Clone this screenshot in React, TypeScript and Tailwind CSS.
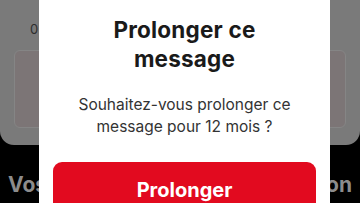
import React from 'react';

const App: React.FC = () => {
    return (
        <div
            className="relative w-[360px] h-[203px] overflow-hidden bg-black"
            style={{ fontFamily: 'Inter, "Noto Sans", sans-serif' }}>
            {/* Dimmed page behind the dialog */}
            <div className="flex flex-col h-full">
                <div className="h-[145px] bg-[#7a7a7a] rounded-b-[14px] flex flex-col px-[14px]">
                    <div className="flex justify-between items-center h-[50px] pt-[10px] px-[16px] text-[13px] text-[#2e2e2e]">
                        <span>0</span>
                        <span>9</span>
                    </div>
                    <div className="h-[78px] bg-[#7c7576] border border-[#858585] rounded-[6px]" />
                </div>
                <div className="flex justify-between items-center px-[8px] pt-[24px] text-[21px] font-bold text-[#8c8c8c]">
                    <span>Vos</span>
                    <span>ion</span>
                </div>
            </div>

            {/* Dialog */}
            <div className="absolute left-[39px] top-[-20px] w-[291px] h-[270px] bg-white rounded-[12px] flex flex-col items-center pt-[35px] px-[15px]">
                <h2 className="text-[22.5px] leading-[29px] font-bold text-[#1a1a1a] text-center w-[170px] tracking-[0.2px]">
                    Prolonger ce message
                </h2>
                <p className="mt-[21px] text-[15.5px] leading-[22px] text-[#333] text-center w-[250px]">
                    Souhaitez-vous prolonger ce message pour 12 mois ?
                </p>
                <button className="mt-[24px] w-[263px] h-[60px] bg-[#e20a1f] rounded-[9px] text-white text-[20px] leading-[24px] font-bold flex justify-center pt-[16px]">
                    Prolonger
                </button>
            </div>
        </div>
    );
};

export default App;
